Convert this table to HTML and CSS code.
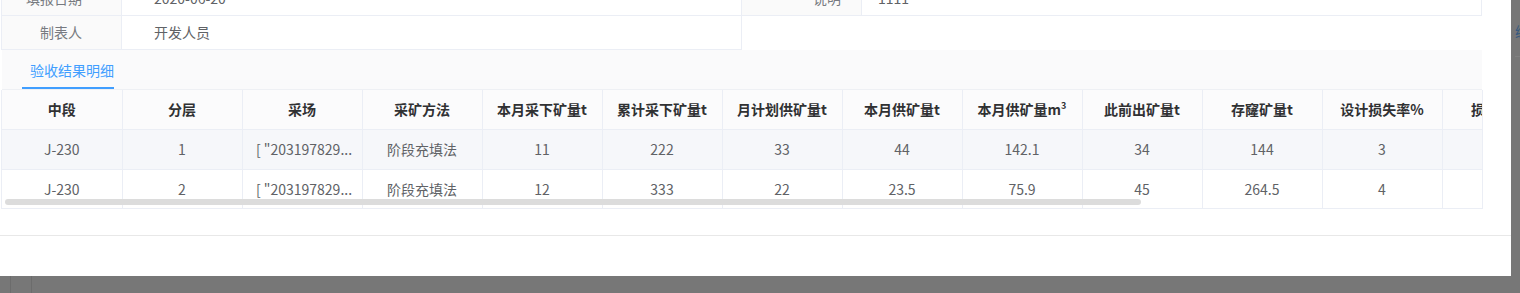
FILE: index.html
```html
<!DOCTYPE html>
<html lang="zh">
<head>
<meta charset="utf-8">
<link rel="stylesheet" href="styles.css">
</head>
<body>
<div class="screen">
  <div class="top">
    <div class="modal">
      <div class="modal-body">
        <div class="desc">
          <div class="desc-col desc-left">
            <div class="desc-row">
              <div class="desc-label">填报日期</div>
              <div class="desc-value">2020-06-20</div>
            </div>
            <div class="desc-row">
              <div class="desc-label">制表人</div>
              <div class="desc-value">开发人员</div>
            </div>
          </div>
          <div class="desc-col desc-right">
            <div class="desc-row">
              <div class="desc-label">说明</div>
              <div class="desc-value">1111</div>
            </div>
          </div>
        </div>
        <div class="tabs">
          <div class="tab active">验收结果明细</div>
        </div>
        <div class="table-wrap">
          <table class="grid">
            <thead>
              <tr>
                <th>中段</th><th>分层</th><th>采场</th><th>采矿方法</th><th>本月采下矿量t</th><th>累计采下矿量t</th><th>月计划供矿量t</th><th>本月供矿量t</th><th>本月供矿量m<sup>3</sup></th><th>此前出矿量t</th><th>存窿矿量t</th><th>设计损失率%</th><th>损失矿量t</th>
              </tr>
            </thead>
            <tbody>
              <tr class="hover">
                <td>J-230</td><td>1</td><td><span class="ell">[ "203197829...</span></td><td>阶段充填法</td><td>11</td><td>222</td><td>33</td><td>44</td><td>142.1</td><td>34</td><td>144</td><td>3</td><td></td>
              </tr>
              <tr>
                <td>J-230</td><td>2</td><td><span class="ell">[ "203197829...</span></td><td>阶段充填法</td><td>12</td><td>333</td><td>22</td><td>23.5</td><td>75.9</td><td>45</td><td>264.5</td><td>4</td><td></td>
              </tr>
            </tbody>
          </table>
          <div class="scroll-thumb"></div>
        </div>
      </div>
      <div class="modal-footer"></div>
    </div>
    <div class="side">
      <div class="side-text">编辑</div>
    </div>
  </div>
  <div class="bottom">
    <div class="bline b1"></div>
    <div class="bline b2"></div>
  </div>
</div>
</body>
</html>
```

FILE: styles.css
```css
* { box-sizing: border-box; }
html, body { margin: 0; padding: 0; }
body {
  width: 1520px;
  height: 293px;
  overflow: hidden;
  background: #777777;
  font-family: "Noto Sans CJK SC", "Noto Sans", sans-serif;
  font-size: 14px;
  color: #606266;
}
.screen { display: flex; flex-direction: column; width: 1520px; height: 293px; }
.top { display: flex; height: 276px; }
.modal {
  width: 1511px;
  height: 276px;
  background: #fff;
  overflow: hidden;
  display: flex;
  flex-direction: column;
}
.modal-body {
  margin-top: -18px;
  padding: 0 29px 0 1px;
}
.desc { display: flex; }
.desc-col { width: 741px; }
.desc-left { border-left: 1px solid #ebeef5; border-right: 1px solid #ebeef5; }
.desc-right { width: 740px; border-right: 1px solid #ebeef5; align-self: flex-start; }
.desc-row {
  display: grid;
  grid-template-columns: 120px 1fr;
  height: 34px;
  border-bottom: 1px solid #ebeef5;
}
.desc-label {
  background: #fafafa;
  border-right: 1px solid #ebeef5;
  text-align: right;
  padding-right: 39px;
  line-height: 33px;
  color: #777a80;
}
.desc-value { padding-left: 32px; line-height: 33px; color: #606266; }
.desc-right .desc-value { padding-left: 16px; }
.desc-right .desc-label { padding-right: 20px; }

.tabs {
  height: 40px;
  background: #fafafb;
  margin-left: 1px;
  display: flex;
  padding-left: 20px;
  border-bottom: 1px solid #eef0f4;
}
.tab {
  height: 39px;
  line-height: 40px;
  padding: 0 0 0 8px;
  width: 92px;
  color: #409eff;
  font-size: 14px;
}
.tab.active { border-bottom: 2px solid #409eff; }

.table-wrap {
  position: relative;
  margin-left: 0;
  width: 1482px;
  overflow: hidden;
  border-left: 1px solid #ebeef5;
  border-right: 1px solid #ebeef5;
  border-bottom: 1px solid #ebeef5;
}
.grid {
  border-collapse: collapse;
  table-layout: fixed;
  width: 1560px;
}
.grid th, .grid td {
  width: 120px;
  height: 40px;
  padding: 0 8px;
  text-align: center;
  border-right: 1px solid #ebeef5;
  border-bottom: 1px solid #ebeef5;
  white-space: nowrap;
  overflow: hidden;
}
.grid th {
  background: #fbfbfc;
  color: #303133;
  font-weight: 700;
  font-size: 14px;
  height: 39px;
}
.grid th sup { font-size: 9px; vertical-align: 6px; line-height: 0; }
.grid td { color: #606266; font-size: 14px; }
.grid tr.hover td { background: #f6f7fa; }
.grid tbody tr:last-child td { border-bottom: none; height: 39px; }
.ell {
  display: block;
  overflow: hidden;
  white-space: nowrap;
  padding-left: 4px;
}
.scroll-thumb {
  position: absolute;
  left: 3px;
  bottom: 3px;
  width: 1136px;
  height: 6px;
  border-radius: 3px;
  background: #dcdcdc;
}
.modal-footer {
  margin-top: 26px;
  border-top: 1px solid #e8e8e8;
  flex: 1;
}
.side {
  width: 9px;
  position: relative;
  overflow: hidden;
}
.side-text {
  margin-top: 23px;
  margin-left: 4px;
  color: #36597f;
  font-size: 14px;
  width: 40px;
  line-height: 16px;
  border-bottom: 1px solid #808080;
  padding-bottom: 17px;
}
.bottom { position: relative; height: 17px; background: #777; }
.bline { position: absolute; top: 0; bottom: 0; width: 1px; background: #6c6c6c; }
.b1 { left: 10px; }
.b2 { left: 31px; }
```
